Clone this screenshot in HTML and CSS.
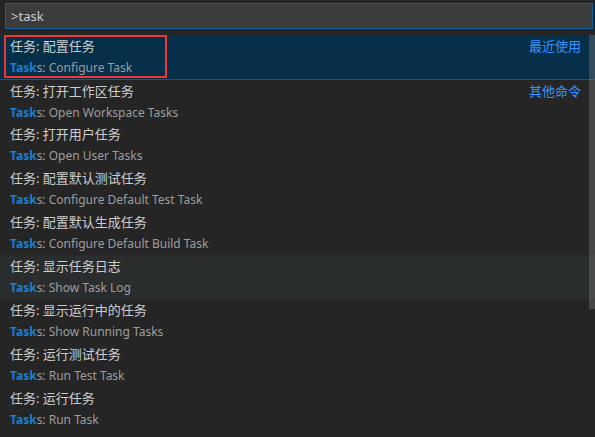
FILE: index.html
```html
<!DOCTYPE html>
<html lang="zh">
<head>
<meta charset="utf-8">
<link rel="stylesheet" href="styles.css">
</head>
<body>
<div class="picker">
  <div class="input-wrap"><div class="input">&gt;task</div></div>
  <div class="list">
    <div class="row selected">
      <div class="line"><span class="label">任务: 配置任务</span><span class="group">最近使用</span></div>
      <div class="detail"><b>Task</b>s: Configure Task</div>
    </div>
    <div class="row sep">
      <div class="line"><span class="label">任务: 打开工作区任务</span><span class="group">其他命令</span></div>
      <div class="detail"><b>Task</b>s: Open Workspace Tasks</div>
    </div>
    <div class="row">
      <div class="line"><span class="label">任务: 打开用户任务</span></div>
      <div class="detail"><b>Task</b>s: Open User Tasks</div>
    </div>
    <div class="row">
      <div class="line"><span class="label">任务: 配置默认测试任务</span></div>
      <div class="detail"><b>Task</b>s: Configure Default Test Task</div>
    </div>
    <div class="row">
      <div class="line"><span class="label">任务: 配置默认生成任务</span></div>
      <div class="detail"><b>Task</b>s: Configure Default Build Task</div>
    </div>
    <div class="row hover">
      <div class="line"><span class="label">任务: 显示任务日志</span></div>
      <div class="detail"><b>Task</b>s: Show Task Log</div>
    </div>
    <div class="row">
      <div class="line"><span class="label">任务: 显示运行中的任务</span></div>
      <div class="detail"><b>Task</b>s: Show Running Tasks</div>
    </div>
    <div class="row">
      <div class="line"><span class="label">任务: 运行测试任务</span></div>
      <div class="detail"><b>Task</b>s: Run Test Task</div>
    </div>
    <div class="row">
      <div class="line"><span class="label">任务: 运行任务</span></div>
      <div class="detail"><b>Task</b>s: Run Task</div>
    </div>
    <div class="scrollbar"></div>
    <div class="annot"></div>
  </div>
</div>
</body>
</html>
```

FILE: styles.css
```css
html, body {
  margin: 0;
  padding: 0;
  background: #252526;
  width: 595px;
  height: 437px;
  overflow: hidden;
}
.picker {
  font-family: "Noto Sans", "Noto Sans CJK SC", sans-serif;
  font-size: 13px;
  color: #cccccc;
}
.input-wrap {
  padding: 3px 2px 6px 5px;
}
.input {
  height: 24px;
  border: 1px solid #0e639c;
  background: #3c3c3c;
  color: #cccccc;
  line-height: 24px;
  padding-left: 5px;
  font-size: 13px;
}
.list {
  position: relative;
}
.row {
  height: 44px;
  box-sizing: border-box;
  padding: 0 14px 0 10px;
}
.row.sep {
  border-top: 1px solid #464646;
}
.row.selected {
  background: #062f4a;
}
.row.hover {
  background: #2a2d2e;
}
.line {
  display: flex;
  justify-content: space-between;
  height: 21px;
  line-height: 21px;
  padding-top: 1px;
}
.group {
  color: #3794ff;
}
.detail {
  height: 21px;
  line-height: 21px;
  font-size: 12px;
  color: #9d9d9d;
}
.detail b {
  color: #1a7fcf;
  font-weight: 700;
}
.scrollbar {
  position: absolute;
  right: 0;
  top: 0;
  width: 6px;
  height: 274px;
  background: rgba(121, 121, 121, 0.4);
}
.annot {
  position: absolute;
  left: 4px;
  top: 0;
  width: 159px;
  height: 39px;
  border: 2px solid #f33434;
}
```
